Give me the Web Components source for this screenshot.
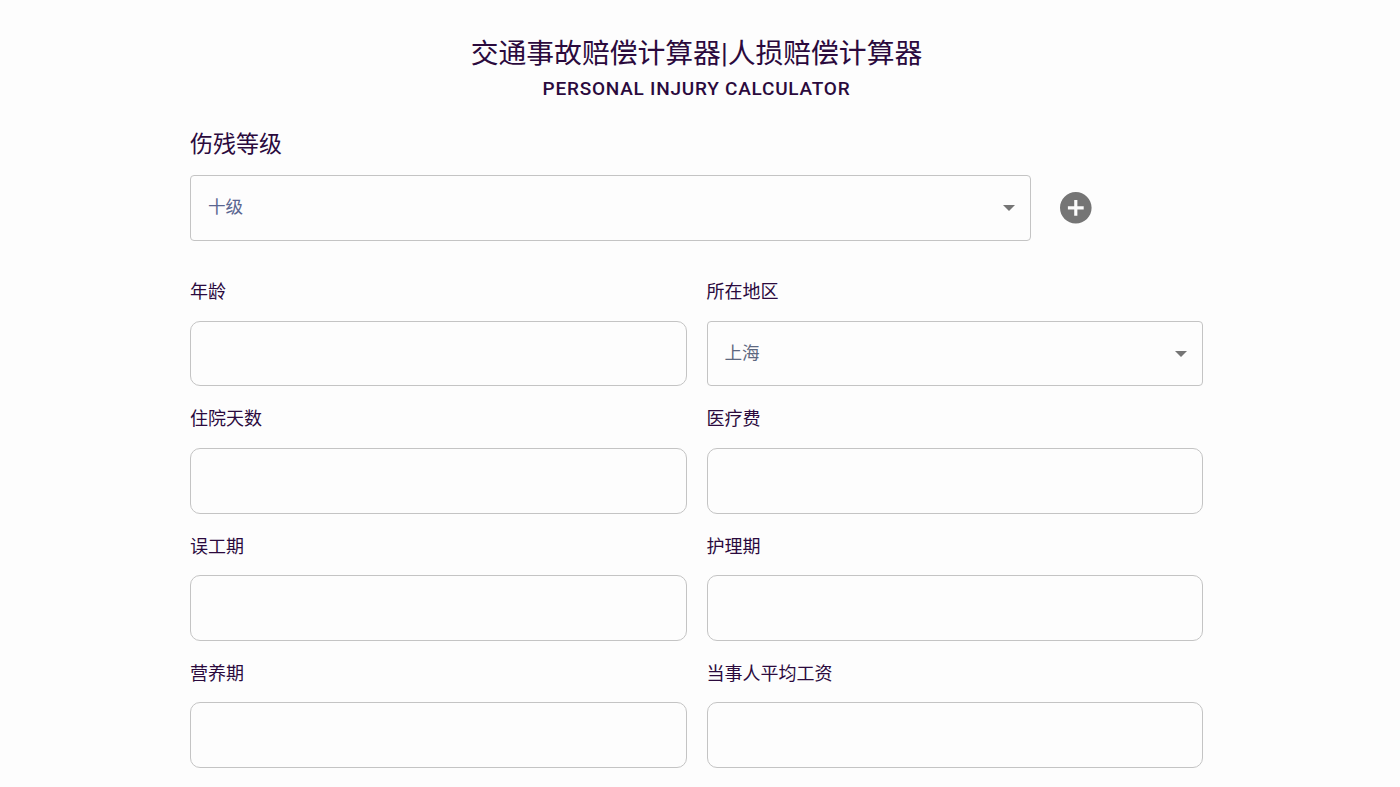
<!DOCTYPE html>
<html lang="zh-CN">
<head>
<meta charset="utf-8">
<title>人损赔偿计算器</title>
<style>
html,body{margin:0;height:787px;overflow:hidden;background:#fdfdfd;}
body{font-family:Roboto,"Noto Sans CJK SC",sans-serif;color:#2b0a3d;}
</style>
</head>
<body>
<calc-page></calc-page>
<template id="t-field">
<style>
:host{display:block;min-width:0}
.label{font-size:18px;line-height:var(--lh,28.4px);height:var(--lh,28.4px);margin:0 0 var(--mb,14.6px);color:#2b0a3d}
</style>
<div class="label"><slot name="label"></slot></div>
<slot></slot>
</template>
<script>
const CJK='Roboto,"Noto Sans CJK SC",sans-serif';
class CalcHeader extends HTMLElement{
  constructor(){super();this.attachShadow({mode:'open'}).innerHTML=`<style>
  :host{display:block;text-align:center;color:#2b0a3d;font-family:${CJK}}
  h1{margin:0;font-weight:400;font-size:27.8px;line-height:34px}
  h2{margin:6px 0 0;font-weight:500;font-size:19px;line-height:24px;letter-spacing:.76px;color:#2b0a3d}
  </style><h1><slot name="title"></slot></h1><h2><slot name="sub"></slot></h2>`;}
}
class CalcInput extends HTMLElement{
  constructor(){super();this.attachShadow({mode:'open'}).innerHTML=`<style>
  :host{display:block;height:var(--h,65.55px)}
  input{display:block;box-sizing:border-box;width:100%;height:100%;border:1px solid #c4c4c4;border-radius:10px;background:#fdfdfd;padding:0 17px;font:16px ${CJK};outline:none}
  </style><input type="text">`;}
}
class CalcSelect extends HTMLElement{
  constructor(){super();this.attachShadow({mode:'open'}).innerHTML=`<style>
  :host{display:flex;align-items:center;box-sizing:border-box;height:var(--h,65.55px);border:1px solid #c4c4c4;border-radius:4px;padding:0 15px 0 17px;font:17.6px ${CJK};color:var(--c,#5d6880);background:#fdfdfd}
  .v{flex:1;margin-bottom:var(--nudge,4px)}
  svg{display:block;width:12px;height:6px;fill:#757575}
  </style><div class="v"><slot></slot></div><svg viewBox="0 0 12 6"><path d="M0 0h12L6 6z"/></svg>`;}
}
class PlusButton extends HTMLElement{
  constructor(){super();this.attachShadow({mode:'open'}).innerHTML=`<style>
  :host{display:block;width:31.6px;height:31.6px}
  svg{display:block;width:100%;height:100%;fill:#757575}
  </style><svg viewBox="2 2 20 20"><path d="M12 2C6.48 2 2 6.48 2 12s4.48 10 10 10 10-4.48 10-10S17.52 2 12 2zm5 11h-4v4h-2v-4H7v-2h4V7h2v4h4v2z"/></svg>`;}
}
class CalcField extends HTMLElement{
  constructor(){super();const s=this.attachShadow({mode:'open'});s.appendChild(document.getElementById('t-field').content.cloneNode(true));}
}
class CalcPage extends HTMLElement{
  constructor(){super();this.attachShadow({mode:'open'}).innerHTML=`<style>
  :host{display:block;box-sizing:border-box;width:1013px;margin-left:190px;padding-top:37px;font-family:${CJK};color:#2b0a3d}
  .sec{font-size:23px;line-height:32px;margin:28px 0 14px}
  .top{display:flex;align-items:flex-start}
  .top calc-select{width:841px;flex:none;--h:66px;--nudge:6px;--c:#5a6690}
  .top plus-button{margin:17px 0 0 29px}
  .grid{display:grid;grid-template-columns:496.5px 496.5px;column-gap:20px;row-gap:18.55px;margin-top:36.9px}
  .grid>:nth-child(n+5){--lh:29px;--mb:14px}
  </style>
  <calc-header><span slot="title">交通事故赔偿计算器|人损赔偿计算器</span><span slot="sub">PERSONAL INJURY CALCULATOR</span></calc-header>
  <div class="sec">伤残等级</div>
  <div class="top"><calc-select>十级</calc-select><plus-button></plus-button></div>
  <div class="grid">
    <calc-field><span slot="label">年龄</span><calc-input></calc-input></calc-field>
    <calc-field><span slot="label">所在地区</span><calc-select>上海</calc-select></calc-field>
    <calc-field><span slot="label">住院天数</span><calc-input></calc-input></calc-field>
    <calc-field><span slot="label">医疗费</span><calc-input></calc-input></calc-field>
    <calc-field><span slot="label">误工期</span><calc-input></calc-input></calc-field>
    <calc-field><span slot="label">护理期</span><calc-input></calc-input></calc-field>
    <calc-field><span slot="label">营养期</span><calc-input></calc-input></calc-field>
    <calc-field><span slot="label">当事人平均工资</span><calc-input></calc-input></calc-field>
  </div>`;}
}
customElements.define('calc-header',CalcHeader);
customElements.define('calc-input',CalcInput);
customElements.define('calc-select',CalcSelect);
customElements.define('plus-button',PlusButton);
customElements.define('calc-field',CalcField);
customElements.define('calc-page',CalcPage);
</script>
</body>
</html>
